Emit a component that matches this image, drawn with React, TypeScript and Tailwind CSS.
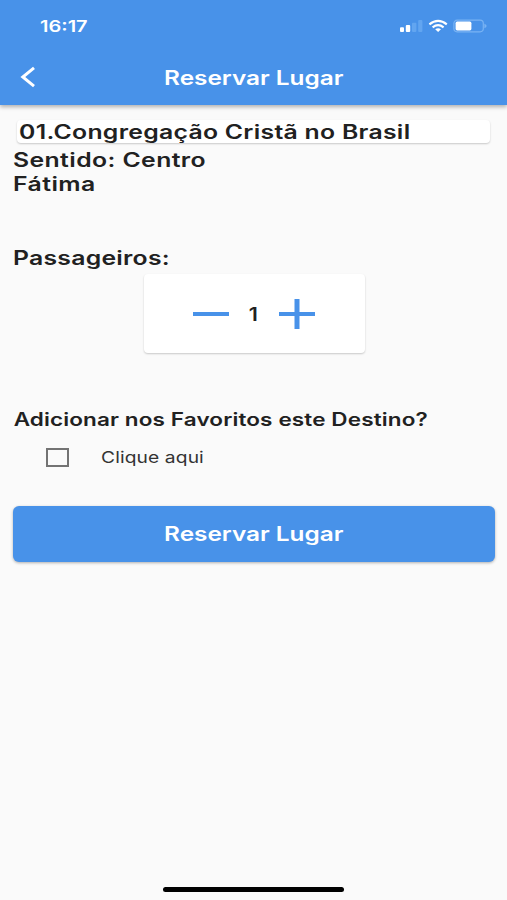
import { useState } from 'react';
import { clsx } from 'clsx';

interface LabelProps {
  children: React.ReactNode;
  className?: string;
}

const Label: React.FC<LabelProps> = ({ children, className }) => (
  <span className={clsx('block w-fit whitespace-nowrap', className)}>{children}</span>
);

const StatusIcons: React.FC = () => (
  <svg width="88" height="16" viewBox="0 0 88 16" fill="none">
    <rect x="1" y="9.2" width="4" height="4.8" rx="1" fill="#fff" />
    <rect x="6.8" y="7" width="4.4" height="7" rx="1" fill="#fff" />
    <rect x="13" y="4.8" width="4.4" height="9.2" rx="1" fill="#62a5f0" />
    <rect x="19.2" y="2" width="4.2" height="12" rx="1" fill="#62a5f0" />
    <g stroke="#fff" strokeWidth="2.1">
      <path d="M30.4 6.4Q39.1 -.6 47.8 6.4" />
      <path d="M33.6 9.3Q39.1 5 44.6 9.3" />
    </g>
    <path d="M36.2 11.3Q39.1 9 42 11.3L39.1 13.9Z" fill="#fff" />
    <rect x="54.9" y="2.2" width="29.4" height="11.6" rx="3.2" stroke="#79b3f3" strokeWidth="1.2" />
    <rect x="56.6" y="3.6" width="15.8" height="8.8" rx="1.6" fill="#fff" />
    <path d="M85.4 5.8Q87.6 6.5 87.6 8T85.4 10.2Z" fill="#79b3f3" />
  </svg>
);

const App: React.FC = () => {
  const [passengers, setPassengers] = useState<number>(1);
  const [favorite, setFavorite] = useState<boolean>(false);

  return (
    <div className="flex h-[900px] w-[507px] flex-col overflow-hidden bg-[#fafafa] font-['Inter','Liberation_Sans',sans-serif] text-[#212121]">
      <header className="h-[105px] shrink-0 bg-[#4892e9] text-white shadow-[0_2px_4px_rgba(0,0,0,0.3)]">
        <div className="flex h-[52px] items-center justify-between pl-10 pr-5">
          <Label className="origin-left scale-x-[1.25] text-[16px] font-semibold">16:17</Label>
          <StatusIcons />
        </div>
        <div className="grid h-[50px] grid-cols-[60px_1fr_60px] items-center">
          <button className="pl-5" aria-label="Voltar">
            <svg width="16" height="22" viewBox="0 0 16 22" fill="none" stroke="#fff" strokeWidth="3">
              <path d="M14 1.8L2.8 11L14 20.2" />
            </svg>
          </button>
          <Label className="mx-auto scale-x-[1.25] pt-[3px] text-[19.5px] font-semibold">Reservar Lugar</Label>
        </div>
      </header>

      <main className="flex flex-col pl-[13px] pr-3 pt-[15px]">
        <div className="ml-1 mr-[5px] h-[23px] rounded-[4px] bg-white pl-[1.5px] pt-px leading-[23px] shadow-[0_1px_2px_rgba(0,0,0,0.2)]">
          <Label className="origin-left scale-x-[1.27] text-[19.5px] font-semibold tracking-[0.23px]">
            01.Congregação Cristã no Brasil
          </Label>
        </div>
        <div className="mt-[5px] text-[19.5px] font-semibold leading-6">
          <Label className="origin-left scale-x-[1.27] tracking-[0.32px]">Sentido: Centro</Label>
          <Label className="origin-left scale-x-[1.27] tracking-[0.35px]">Fátima</Label>
        </div>

        <Label className="mt-[50px] origin-left scale-x-[1.27] text-[19.5px] font-semibold leading-6 tracking-[0.2px]">
          Passageiros:
        </Label>
        <div className="mx-auto mt-1 flex h-[79px] w-[221px] items-center justify-center rounded-[4px] bg-white shadow-[0_1px_2px_rgba(0,0,0,0.2)]">
          <button aria-label="Menos" onClick={() => setPassengers(Math.max(1, passengers - 1))}>
            <svg width="36" height="30" viewBox="0 0 36 30">
              <path d="M0 13h36v4H0z" fill="#4892e9" />
            </svg>
          </button>
          <span className="w-[50px] scale-x-[1.2] pr-px pt-px text-center text-[18px] font-semibold">{passengers}</span>
          <button aria-label="Mais" onClick={() => setPassengers(passengers + 1)}>
            <svg width="36" height="30" viewBox="0 0 36 30">
              <path d="M0 13h15.5V0h5v13H36v4H20.5v13h-5V17H0z" fill="#4892e9" />
            </svg>
          </button>
        </div>

        <Label className="mt-[55px] origin-left scale-x-[1.25] pl-[0.5px] text-[18px] font-semibold leading-6 tracking-[0.1px]">
          Adicionar nos Favoritos este Destino?
        </Label>
        <label className="mt-[15px] flex h-5 items-center pl-[33px]">
          <input
            type="checkbox"
            checked={favorite}
            onChange={() => setFavorite(!favorite)}
            className="h-[19px] w-[23px] appearance-none border-2 border-[#737373] checked:bg-[#4892e9]"
          />
          <Label className="ml-8 origin-left scale-x-[1.2] pb-px text-[16px] tracking-[0.1px] text-[#333]">Clique aqui</Label>
        </label>

        <button className="mt-[39px] flex h-14 items-center justify-center rounded-[6px] bg-[#4892e9] text-white shadow-[0_1px_3px_rgba(0,0,0,0.3)]">
          <Label className="scale-x-[1.25] pt-px text-[19.5px] font-semibold">Reservar Lugar</Label>
        </button>
      </main>

      <div className="mx-auto mb-2 mt-auto h-[5px] w-[181px] rounded-full bg-black" />
    </div>
  );
};

export default App;
